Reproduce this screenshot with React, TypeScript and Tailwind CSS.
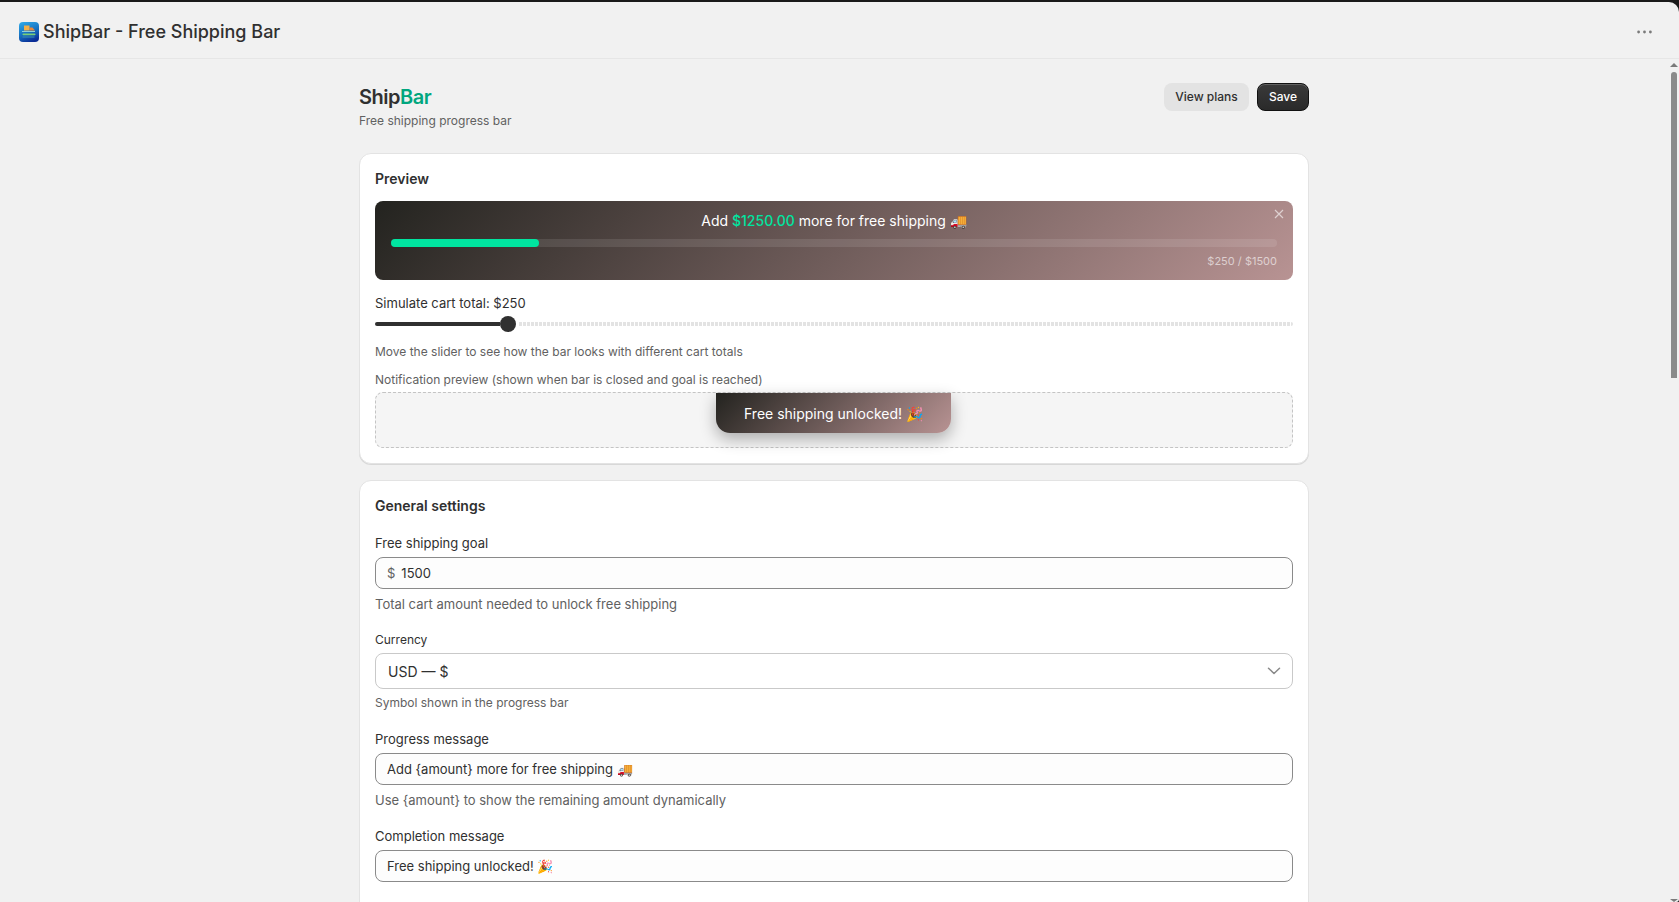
const font = "font-['Inter','Noto_Sans',sans-serif]"

function AppIcon() {
  return (
    <svg width="20" height="20" viewBox="0 0 20 20" className="shrink-0">
      <defs>
        <linearGradient id="appbg" x1="0.2" y1="0" x2="0.6" y2="1">
          <stop offset="0" stopColor="#2ea6e6" />
          <stop offset="0.55" stopColor="#1670c0" />
          <stop offset="1" stopColor="#0a2c96" />
        </linearGradient>
      </defs>
      <rect width="20" height="20" rx="4" fill="url(#appbg)" />
      <rect x="5" y="3.5" width="5.5" height="5" fill="#f2b04a" />
      <path d="M10.5 5.5h3l2.5 3h-5.5z" fill="#e8873a" />
      <rect x="3" y="9" width="13" height="1" fill="#8fd0d8" />
      <rect x="3.5" y="11.5" width="13" height="1.7" rx="0.8" fill="#79cf78" />
      <rect x="3.5" y="14.5" width="12" height="1" fill="#3f8fb0" />
    </svg>
  )
}

function Label({ children, small }: { children: React.ReactNode; small?: boolean }) {
  return <div className={`${small ? 'text-[12px]' : 'text-[13px]'} leading-[20px] text-[#303030]`}>{children}</div>
}

function Help({ children }: { children: React.ReactNode }) {
  return <div className="mt-[5px] text-[13px] leading-[20px] text-[#616161]">{children}</div>
}

function TextField({ value, prefix }: { value: string; prefix?: string }) {
  return (
    <div className="mt-[4px] flex h-[32px] items-center rounded-[8px] border border-[#8a8a8a] bg-[#fdfdfd] px-[11px] pt-[2px] text-[13px] text-[#303030]">
      {prefix && <span className="mr-[6px] text-[#616161]">{prefix}</span>}
      <input readOnly value={value} className="w-full bg-transparent outline-none" />
    </div>
  )
}

export default function App() {
  return (
    <div className={`${font} flex h-[902px] flex-col overflow-hidden bg-[#1a1a1a] pt-[2px]`}>
      <div className="flex min-h-0 flex-1 flex-col overflow-hidden rounded-tr-[10px] rounded-br-[3px] bg-[#f1f1f1]">
        {/* Title bar */}
        <header className="flex h-[57px] shrink-0 items-center justify-between border-b border-[#e6e6e6] pl-[19px] pr-[27px] pt-[3px]">
          <div className="flex items-center gap-[4px]">
            <AppIcon />
            <span className="text-[18px] font-medium text-[#303030]">ShipBar - Free Shipping Bar</span>
          </div>
          <svg width="15" height="4" viewBox="0 0 15 4">
            <circle cx="1.6" cy="2" r="1.4" fill="#7a7a7a" />
            <circle cx="7.5" cy="2" r="1.4" fill="#7a7a7a" />
            <circle cx="13.4" cy="2" r="1.4" fill="#7a7a7a" />
          </svg>
        </header>

        <div className="flex min-h-0 flex-1">
          {/* Page */}
          <main className="min-w-0 flex-1 overflow-hidden">
            <div className="mx-auto w-[950px] pt-[24px]">
              <div className="flex items-start justify-between">
                <div>
                  <h1 className="text-[20px] font-semibold leading-[28px] tracking-[-0.5px] text-[#303030]">
                    Ship<span className="text-[#00a67e]">Bar</span>
                  </h1>
                  <p className="mt-[2px] text-[12px] leading-[16px] text-[#616161]">Free shipping progress bar</p>
                </div>
                <div className="flex gap-[8px]">
                  <button className="h-[28px] w-[85px] rounded-[8px] bg-[#e3e3e3] text-[12px] font-medium text-[#303030]">View plans</button>
                  <button className="h-[28px] w-[52px] rounded-[8px] border border-[#111] bg-gradient-to-b from-[#3a3a3a] to-[#2a2a2a] text-[12px] font-medium text-white shadow-[inset_0_1px_0_rgba(255,255,255,0.2)]">Save</button>
                </div>
              </div>

              {/* Preview */}
              <section className="mt-[24px] rounded-[12px] border border-[#e3e3e3] bg-white p-[15px] shadow-[0_1px_0_rgba(0,0,0,0.1)]">
                <h2 className="text-[14px] font-semibold leading-[20px] text-[#303030]">Preview</h2>
                <div className="relative mt-[12px] h-[79px] rounded-[8px] bg-[linear-gradient(135deg,#23231f,#b89393)] px-[16px] pt-[10px]">
                  <div className="text-center text-[14px] leading-[20px] text-white">
                    Add <span className="font-medium text-[#00e5a0]">$1250.00</span> more for free shipping 🚚
                  </div>
                  <div className="mt-[8px] h-[8px] rounded-full bg-white/10">
                    <div className="h-full w-[148px] rounded-full bg-[#00e5a0]" />
                  </div>
                  <div className="mt-[7px] text-right text-[11px] leading-[14px] text-white/60">$250 / $1500</div>
                  <svg className="absolute right-[9px] top-[8px]" width="10" height="10" viewBox="0 0 10 10">
                    <path d="M1 1l8 8M9 1l-8 8" stroke="rgba(255,255,255,0.6)" strokeWidth="1.2" />
                  </svg>
                </div>

                <div className="mt-[13px] text-[13px] leading-[20px] text-[#303030]">Simulate cart total: $250</div>
                <div className="mt-[3px] flex h-[16px] items-center">
                  <div className="h-[4px] w-[125px] rounded-l-full bg-[#303030]" />
                  <div className="h-[16px] w-[16px] shrink-0 rounded-full bg-[#303030]" />
                  <div className="ml-[3px] h-[4px] flex-1 rounded-r-full bg-[repeating-linear-gradient(90deg,#e3e3e3_0,#e3e3e3_3px,#ffffff_3px,#ffffff_4px)]" />
                </div>
                <div className="mt-[12px] text-[12px] leading-[16px] text-[#616161]">Move the slider to see how the bar looks with different cart totals</div>
                <div className="mt-[12px] text-[12px] leading-[16px] text-[#616161]">Notification preview (shown when bar is closed and goal is reached)</div>
                <div className="mt-[4px] flex h-[56px] justify-center rounded-[8px] border border-dashed border-[#c4c4c4] bg-[#f5f5f5]">
                  <div className="-ml-[1px] flex h-[40px] w-[235px] items-center justify-center rounded-b-[14px] bg-[linear-gradient(135deg,#23231f,#b89393)] text-[14px] text-white shadow-[0_6px_16px_rgba(0,0,0,0.3)]">
                    Free shipping unlocked! 🎉
                  </div>
                </div>
              </section>

              {/* General settings */}
              <section className="mt-[16px] rounded-[12px] border border-[#e3e3e3] bg-white p-[15px] pb-[40px]">
                <h2 className="text-[14px] font-semibold leading-[20px] text-[#303030]">General settings</h2>
                <div className="mt-[17px]">
                  <Label>Free shipping goal</Label>
                  <TextField value="1500" prefix="$" />
                  <Help>Total cart amount needed to unlock free shipping</Help>
                </div>
                <div className="mt-[16px]">
                  <Label small>Currency</Label>
                  <div className="mt-[3px] flex h-[36px] items-center justify-between rounded-[8px] border border-[#c9c9c9] bg-white pl-[12px] pr-[11px] text-[14px] text-[#303030]">
                    <span>USD — $</span>
                    <svg width="14" height="8" viewBox="0 0 14 8">
                      <path d="M1.5 1.2L7 6.5l5.5-5.3" fill="none" stroke="#8a8a8a" strokeWidth="1.5" strokeLinecap="round" strokeLinejoin="round" />
                    </svg>
                  </div>
                  <div className="mt-[6px] text-[12px] leading-[16px] text-[#616161]">Symbol shown in the progress bar</div>
                </div>
                <div className="mt-[18px]">
                  <Label>Progress message</Label>
                  <TextField value="Add {amount} more for free shipping 🚚" />
                  <Help>Use {'{amount}'} to show the remaining amount dynamically</Help>
                </div>
                <div className="mt-[16px]">
                  <Label>Completion message</Label>
                  <TextField value="Free shipping unlocked! 🎉" />
                </div>
              </section>
            </div>
          </main>

          {/* Scrollbar */}
          <div className="flex w-[11px] shrink-0 flex-col items-center">
            <div className="mt-[4px] h-0 w-0 border-x-[4px] border-b-[4px] border-x-transparent border-b-[#7a7a7a]" />
            <div className="mt-[5px] h-[306px] w-[6px] rounded-t-[3px] bg-[#8a8a8a]" />
            <div className="mt-auto h-0 w-0 border-x-[4px] border-t-[3px] border-x-transparent border-t-[#7a7a7a]" />
          </div>
        </div>
      </div>
    </div>
  )
}
